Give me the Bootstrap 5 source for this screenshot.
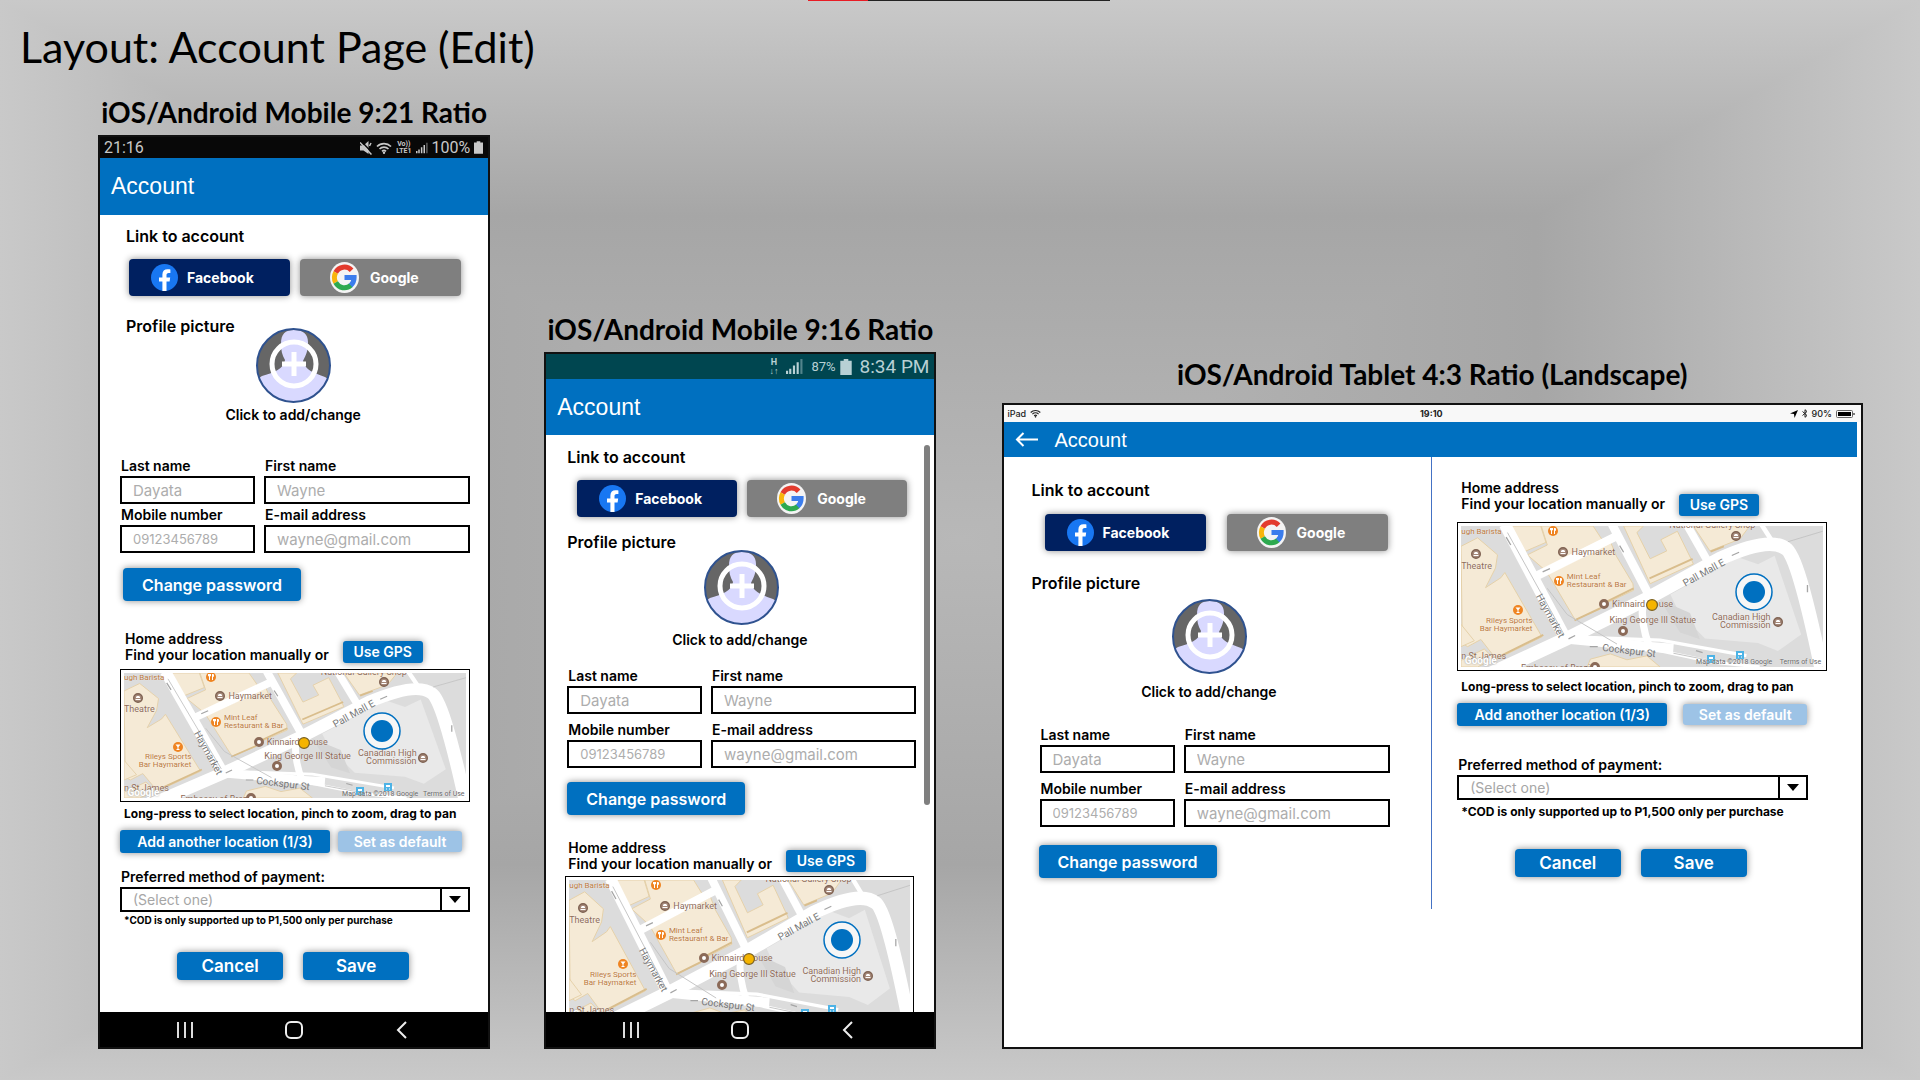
<!DOCTYPE html>
<html lang="en">
<head>
<meta charset="utf-8">
<meta name="viewport" content="width=device-width, initial-scale=1">
<title>Layout: Account Page (Edit)</title>
<link href="https://cdn.jsdelivr.net/npm/bootstrap@5.3.0/dist/css/bootstrap.min.css" rel="stylesheet">
<style>
  :root { --brand: #0070c0; }
  body { font-family: Inter, "Noto Sans", sans-serif; color: #000; background: #bfbfbf; }
  .slide { position: relative; isolation: isolate; min-height: 100vh; overflow: hidden; padding: 0 57px 31px 98px; background: linear-gradient(to bottom, #c9c9c9 0, #a6a6a6 20%, #b8b8b8 50%, #a6a6a6 80%, #c9c9c9 100%); }
  .slide::before { content: ""; position: absolute; inset: 0; z-index: -1; background: linear-gradient(to right, #c9c9c9 0, #a6a6a6 20%, #b8b8b8 50%, #a6a6a6 80%, #c9c9c9 100%); clip-path: polygon(0 0, 100% 100%, 100% 0, 0 100%); }
  .share-bar { position: absolute; top: 0; left: 42.1%; width: 15.7%; height: 1px; background: linear-gradient(to right, #e81c24 20%, #222 20%); }
  .slide-title { font: 400 43px/50px Lato, sans-serif; margin: 0 0 0 -78px; padding-top: 22px; }
  .boards { margin-top: 24px; }
  .board-phone { flex: 392 1 0; min-width: 0; }
  .board-tablet { flex: 861 1 0; min-width: 0; }
  .gap-a { flex: 54 1 0; } .gap-b { flex: 65 1 0; }
  .caption { font: 700 28px/32px Lato, sans-serif; margin: 0 0 7px; text-align: center; white-space: nowrap; }
  .board-tablet .caption { margin-bottom: 13px; }
  .device { border: 2px solid #111; background: #fff; }

  .status { font: 400 16px/21px Roboto, sans-serif; height: 21px; padding: 0 5px 0 4px; }
  .status-dark { background: #080808; color: #c8c8c8; }
  .status-teal { background: #004650; color: #b8d0d4; height: 25px; font-size: 19px; }
  .status-pad { font: 500 9px/17px Inter, sans-serif; height: 17px; padding: 0 6px 0 4px; background: #f8f8f8; color: #222; }
  .status-pad > * { flex: 1 1 0; }
  .net-lte { font-size: 7px; line-height: 7px; }
  .net-h { font-size: 9px; line-height: 9px; }
  .tiny { font-size: 13px; }
  .app-head { background: var(--brand); color: #fff; height: 57px; padding-left: 11px; font: 400 23px/1 "Liberation Sans", sans-serif; }
  .status-teal + .app-head { height: 56px; }
  .app-head h3 { font: inherit; margin: 0; }
  .app-head-pad { height: 35px; margin-right: 4px; padding-left: 11px; gap: 17px; font-size: 20px; }

  .label-lg { font-weight: 600; font-size: 16px; line-height: 20px; }
  .label-md { font-weight: 600; font-size: 14px; line-height: 20px; }
  .label-sm { font-weight: 600; font-size: 14px; line-height: 16px; margin: 0 0 2px 1px; display: block; white-space: nowrap; }
  .hint { font-weight: 700; font-size: 12px; line-height: 16px; white-space: nowrap; margin: 0; }
  .hint-min { font-size: 10px; }

  .act { border: 0; border-radius: 3px; color: #fff; background: var(--brand); font-weight: 600; font-size: 14px; line-height: 20px; padding: 0; box-shadow: 0 0 7px rgba(0,0,0,.45); white-space: nowrap; }
  .act:disabled { background: #9dc3e6; color: #fff; opacity: 1; }
  .act-social { flex: 1 1 50%; height: 37px; display: flex; align-items: center; gap: 9px; padding: 0 0 0 22px; font-weight: 700; border-radius: 4px; }
  .act-fb { background: #002060; }
  .act-gg { background: #7f7f7f; padding-left: 30px; gap: 11px; }
  .act-password { width: 178px; height: 33px; font-size: 16px; border-radius: 4px; }
  .act-gps { width: 80px; height: 22px; }
  .act-add { flex: 209 1 0; max-width: 210px; height: 23px; }
  .act-default { flex: 124 1 0; max-width: 124px; height: 21px; }
  .act-final { width: 106px; height: 28px; font-size: 17px; border-radius: 4px; }
  .finals { gap: 20px; padding-right: 4px; }

  .avatar-grid { display: grid; grid-template-columns: 1fr 75px 1fr; }
  .avatar { width: 75px; height: 75px; border: 0; padding: 0; background: none; border-radius: 50%; display: block; }
  .avatar svg { display: block; }
  .click { padding-right: 4px; }
  .fields { display: grid; grid-template-columns: 135fr 206fr; column-gap: 9px; }
  .box { display: block; width: 100%; height: 28px; border: 2px solid #000; border-radius: 0; background: #fff; padding: 0 11px; font-size: 15px; font-weight: 400; color: #000; }
  .box[type=tel] { font-size: 13px; }
  .box::placeholder { color: #adadad; opacity: 1; }
  .pick { position: relative; }
  .pick select { appearance: none; width: 100%; height: 25px; border: 2px solid #000; border-radius: 0; background: #fff; color: #a6a6a6; font-size: 14px; padding: 0 40px 0 11px; display: block; }
  .pick span { position: absolute; right: 0; top: 0; bottom: 0; width: 30px; border: 2px solid #000; pointer-events: none; display: flex; align-items: center; justify-content: center; }
  .home { gap: 14px; }
  .address { line-height: 16px; font-size: 14px; font-weight: 600; white-space: nowrap; }

  .map-frame { border: 1px solid #000; padding: 3px; background: #fff; height: 133px; }
  .map-tall { height: 149px; }
  .map-canvas { position: relative; height: 100%; overflow: hidden; font: 400 9px/8px Roboto, sans-serif; color: #8d6b58; background: #dedede; }
  .map-canvas > svg.ground { position: absolute; inset: 0; width: 100%; height: 100%; }
  .tag { position: absolute; transform: translateY(-50%); white-space: nowrap; text-shadow: 0 0 1px #fff; }
  .tag-end { transform: translate(-100%, -50%); text-align: right; }
  .road { position: absolute; transform: translate(-50%, -50%) rotate(var(--turn)); color: #777; font-size: 10px; white-space: nowrap; }
  .food { color: #b9783c; font-size: 8px; }
  .legal { color: #666; font-size: 7px; }
  .maker { color: #fff; font-weight: 700; font-size: 10px; text-shadow: 0 0 2px #999; }
  .poi { position: absolute; width: 10px; height: 10px; transform: translate(-50%, -50%); display: block; }
  .poi-me { width: 12px; height: 12px; }
  .spot { position: absolute; width: 38px; height: 38px; transform: translate(-50%, -50%); left: var(--pin-x); top: var(--pin-y); }

  /* 9:21 phone */
  .p21 { padding: 11px 18px 32px 20px; }
  .p21 .label-lg { margin-left: 6px; }
  .p21 .social { margin: 13px 9px 0; gap: 10px; }
  .p21 .profile { margin-top: 20px; padding-right: 4px; } .p21 .avatar { margin-top: 12px; } .p21 .click { margin-top: 2px; }
  .p21 .fields { margin-top: 33px; row-gap: 3px; }
  .p21 .act-password { margin: 15px 0 0 3px; }
  .p21 .home { margin: 30px 0 6px 5px; }
  /* 9:16 phone */
  .p16 { position: relative; height: 577px; overflow: hidden; padding: 12px 18px 0 21px; }
  .p16 .social { margin: 13px 9px 0 10px; gap: 10px; }
  .p16 .profile { margin-top: 15px; } .p16 .avatar { margin-top: 18px; } .p16 .click { margin-top: 5px; }
  .p16 .fields { margin-top: 18px; row-gap: 8px; }
  .p16 .act-password { margin-top: 14px; }
  .p16 .home { margin: 25px 0 4px 1px; }
  .p16 .map-frame { margin: 0 2px 0 -2px; }
  .thumb { position: absolute; right: 4px; top: 10px; width: 6px; height: 360px; border-radius: 3px; background: #7f7f7f; }
  /* 4:3 tablet */
  .p43 { min-height: 590px; }
  .pane-left { min-height: 452px; border-right: 1px solid #4472c4; padding: 23px 41px 0 28px; }
  .pane-right { padding: 23px 34px 0 25px; }
  .inset-l { margin-left: 8px; }
  .p43 .social { margin: 14px 2px 0 13px; gap: 21px; }
  .p43 .profile { margin-top: 22px; padding-right: 2px; } .p43 .avatar { margin-top: 26px; } .p43 .click { margin-top: 8px; }
  .p43 .fields { margin-top: 25px; row-gap: 8px; }
  .p43 .act-password { margin: 18px 0 0 7px; }
  .p43 .home { margin: 0 0 6px 4px; }
  .p43 .payment { margin-top: 31px; }
  .p43 .finals { margin-top: 29px; }
  .narrow { max-width: 351px; }

  .keys { background: #000; height: 35px; padding: 0 30px; }
  .keys button { flex: 1 1 0; background: none; border: 0; padding: 0; display: flex; align-items: center; justify-content: center; }
</style>
</head>
<body>
<svg width="0" height="0" class="position-absolute" aria-hidden="true">
  <symbol id="i-fb" viewBox="0 0 27 27"><circle cx="13.500" cy="13.500" r="13.500" fill="#1877f2"/><path fill="#fff" d="M11.400 27v-9.500H8V13.600h3.400v-3c0-3.500 2-5.300 5.100-5.300 1.500 0 2.900.2 2.900.2v3.400h-1.700c-1.700 0-2.200 1-2.200 2.100v2.600h3.700l-.6 3.900h-3.100V27z"/></symbol>
  <symbol id="i-gg" viewBox="0 0 29 31"><ellipse cx="14.500" cy="15.500" rx="14.500" ry="15.500" fill="#f4f4f4"/><g fill="none" stroke-width="5"><path stroke="#e33b2e" d="M5.700 10.500A10 10.500 0 0 1 21.600 8.200"/><path stroke="#f9b50b" d="M5.700 10.500a10.500 10.500 0 0 0 0 10"/><path stroke="#2da94f" d="M5.700 20.500A10 10.500 0 0 0 21 23.200"/><path stroke="#3b7ded" d="M14.500 15.500h9.600c0 3.200-1.200 6-3.400 8"/></g></symbol>
  <symbol id="i-avatar" viewBox="0 0 75 75"><clipPath id="round"><circle cx="37.500" cy="37.500" r="36.500"/></clipPath><g clip-path="url(#round)"><rect width="75" height="75" fill="#666"/><path fill="#d9d9ff" d="M25 16C25 6 29 2 38 2s14 4 14 12c0 9-2 13-5 19 2 9 11 12 22 16l6 4v22H0V52l6-4c11-3 22-7 23-16-3-5-4-10-4-16z"/></g><circle cx="37.500" cy="37.500" r="36.500" fill="none" stroke="#2f528f" stroke-width="2"/><circle cx="38" cy="36" r="22" fill="none" stroke="#fff" stroke-width="5"/><path stroke="#fff" stroke-width="5" d="M26 36h24M38 24v24"/></symbol>
  <symbol id="i-down" viewBox="0 0 12 7"><path d="M0 0h12L6 7z"/></symbol>
  <symbol id="i-wifi" viewBox="0 0 16 12"><g fill="none" stroke="currentColor" stroke-width="1.700"><path d="M1 4.500a10 10 0 0 1 14 0M3.500 7a6.500 6.500 0 0 1 9 0M6 9.300a3 3 0 0 1 4 0"/></g><circle cx="8" cy="10.800" r="1.200" fill="currentColor"/></symbol>
  <symbol id="i-signal" viewBox="0 0 16 14"><path fill="currentColor" d="M0 11h2v3H0zM3 9h2v5H3zM6.500 6h2v8h-2zM10 3h2v11h-2z"/><path fill="currentColor" opacity=".45" d="M13.500 0h2v14h-2z"/></symbol>
  <symbol id="i-batt" viewBox="0 0 10 14"><path fill="currentColor" d="M3 0h4v1.500h3V14H0V1.500h3z"/></symbol>
  <symbol id="i-mute" viewBox="0 0 12 14"><path fill="currentColor" d="M0 4.500h3.500L8.500 0v13L3.500 9.500H0z"/><path stroke="#080808" stroke-width="1.500" d="m1 0 11 11.500"/><path stroke="currentColor" stroke-width="1.500" d="m0 1.500 11.500 12M9.500 5 11 2"/></symbol>
  <symbol id="k-recent" viewBox="0 0 18 18"><path stroke="#ddd" stroke-width="2" d="M2 1v16M9 1v16M16 1v16"/></symbol>
  <symbol id="k-home" viewBox="0 0 18 18"><rect x="1" y="1" width="16" height="16" rx="5" fill="none" stroke="#eee" stroke-width="2"/></symbol>
  <symbol id="k-back" viewBox="0 0 18 18"><path fill="none" stroke="#eee" stroke-width="2" d="m11 1-8 8 8 8"/></symbol>
  <symbol id="m-food" viewBox="0 0 10 10"><circle cx="5" cy="5" r="5" fill="#ef8422"/><path stroke="#fff" fill="none" d="M3.500 2v6M6.500 2v6M2.500 2v2h2V2M6.500 2.500h1v2h-1"/></symbol>
  <symbol id="m-bar" viewBox="0 0 10 10"><circle cx="5" cy="5" r="5" fill="#ef8422"/><path fill="#fff" d="M2.500 2.500h5L5.500 5v2h1v1h-3V7h1V5z"/></symbol>
  <symbol id="m-dot" viewBox="0 0 10 10"><circle cx="5" cy="5" r="3.500" fill="#fff" stroke="#8b6a58" stroke-width="3"/></symbol>
  <symbol id="m-place" viewBox="0 0 10 10"><circle cx="5" cy="5" r="4.300" fill="#a5897a" stroke="#7f6252" stroke-width="1.400"/><path stroke="#fff" fill="none" d="M2.500 6.500h5M3 4.500h4M3.500 3.500h3"/></symbol>
  <symbol id="m-bus" viewBox="0 0 10 10"><rect x="1" y="1" width="8" height="8" fill="#4db3e6"/><path fill="#fff" d="M3 3h4v2H3zM3 6.500h1v1H3zM6 6.500h1v1H6z"/></symbol>
  <symbol id="m-spot" viewBox="0 0 38 38"><circle cx="19" cy="19" r="18" fill="#fff" fill-opacity=".6" stroke="#0070c0" stroke-width="1.500"/><circle cx="19" cy="19" r="11" fill="#0070c0"/></symbol>
  <symbol id="m-me" viewBox="0 0 10 10"><circle cx="5" cy="5" r="4.500" fill="#f5b400" stroke="#7a6020"/></symbol>
</svg>

<template id="map-template">
  <div class="map-canvas">
    <svg class="ground" viewBox="0 0 1090 430" preserveAspectRatio="none" aria-hidden="true">
      <rect width="1090" height="430" fill="#dcdcdc"/>
      <g fill="#f5ead6" stroke="#e5d0a8" stroke-width="3">
        <path d="M0 62 50 36l60 52-6 40-30 60 46-30 12-16 112 196-138 68-46-60-40 22-16-10z"/>
        <path d="M0 300l40 50-40 18zM30 395l40-20 30 30-50 25H0v-20z"/>
        <path d="M150 0h90l16 50-64 28zM200 88l60-30-18-58h156l30 46-180 84z"/>
        <path d="M262 146 452 52l16 40 50 84 2 20-92 44-10 14-74 32z"/>
        <path d="M490 0h60l-20 20 40 80 50-24-18-34 50-26 44 90 4 10-130 60z"/>
        <path d="M700 0h170l-30 40-90 36z"/>
        <path d="M380 430l10-24 60-16 50 18 60-12 40 34z"/>
      </g>
      <g fill="none" stroke="#d9bd8c" stroke-width="6"><path d="M120 396l128-64M342 288l80-38M424 238l96-48M568 160l130-60M752 78l40-16"/></g>
      <path fill="#e9e9e9" d="M835 95l60 22 50-26 30 90 20 60 30 90-70 50-60-24-160-14-80-84-24-50z"/>
      <path fill="#d5d5d5" d="M600 225l60 100 60 20-30-80z"/>
      <g fill="none" stroke="#fff" stroke-linejoin="round">
        <path stroke-width="36" d="M132-5 318 350"/>
        <path stroke-width="26" d="M222 155 480 25M455-5 572 222"/>
        <path stroke-width="24" d="M680-5 748 116"/>
        <path stroke-width="14" d="M905-5 940 50"/>
        <path stroke-width="42" d="M90 450 330 338 560 222 780 100Q930 30 980 70 1015 90 1085 430"/>
        <path stroke-width="30" d="M330 345Q440 355 560 368L640 374"/>
        <path stroke-width="22" d="M548 235q-8 60 20 135"/>
        <path stroke-width="10" d="M380 340 600 348 860 395M560 372 760 415 900 430"/>
      </g>
      <g fill="none" stroke="#c4c4c4" stroke-width="3"><path d="M985 48 1090 16M260 190l60 80 150 90M140 20l170 310M640 388l110 22"/></g>
      <g fill="none" stroke="#a5a5a5" stroke-width="4"><path d="M136 34l14 24M246 140l22-10M478 60l12 20M816 90l22-10M1044 180v22M388 368h24M324 344l20-10M708 380l20 6"/></g>
    </svg>
    <span class="tag food" style="left:0;top:4%">ugh Barista</span>
    <svg class="poi" style="left:25.500%;top:3.500%"><use href="#m-food"/></svg>
    <span class="tag" style="left:57.500%;top:-1%">National Gallery Shop</span>
    <svg class="poi" style="left:76%;top:7%"><use href="#m-place"/></svg>
    <svg class="poi" style="left:4%;top:20%"><use href="#m-place"/></svg>
    <span class="tag" style="left:0;top:28.500%">Theatre</span>
    <svg class="poi" style="left:28%;top:18.500%"><use href="#m-place"/></svg>
    <span class="tag" style="left:30.500%;top:18.500%">Haymarket</span>
    <svg class="poi" style="left:27%;top:39%"><use href="#m-food"/></svg>
    <span class="tag food" style="left:29.200%;top:39%">Mint Leaf<br>Restaurant &amp; Bar</span>
    <svg class="poi" style="left:39.500%;top:55%"><use href="#m-dot"/></svg>
    <span class="tag" style="left:41.700%;top:55%">Kinnaird House</span>
    <span class="tag" style="left:41%;top:66.500%">King George III Statue</span>
    <svg class="poi" style="left:44.700%;top:74.500%"><use href="#m-dot"/></svg>
    <svg class="poi" style="left:15.700%;top:59.500%"><use href="#m-bar"/></svg>
    <span class="tag tag-end food" style="left:19.700%;top:70.500%">Rileys Sports<br>Bar Haymarket</span>
    <span class="tag tag-end" style="left:85.500%;top:67.500%">Canadian High<br>Commission</span>
    <svg class="poi" style="left:87.500%;top:68%"><use href="#m-place"/></svg>
    <span class="road" style="--turn:61deg;left:24.500%;top:64%">Haymarket</span>
    <span class="road" style="--turn:-29deg;left:67.200%;top:33%">Pall Mall E</span>
    <span class="road" style="--turn:7deg;left:46.400%;top:89%">Cockspur St</span>
    <span class="tag" style="left:0;top:92%">n St James</span>
    <span class="tag maker" style="left:1%;top:96%">Google</span>
    <span class="tag" style="left:16.500%;top:101%">Embassy of Brazil</span>
    <svg class="poi" style="left:37%;top:100%"><use href="#m-dot"/></svg>
    <svg class="poi" style="left:69%;top:94%"><use href="#m-bus"/></svg>
    <svg class="poi" style="left:77%;top:91.500%"><use href="#m-bus"/></svg>
    <span class="tag tag-end legal" style="left:86%;top:96.500%">Map data ©2018 Google</span>
    <span class="tag tag-end legal" style="left:99.500%;top:96.500%">Terms of Use</span>
    <svg class="poi poi-me" style="left:52.600%;top:56%"><use href="#m-me"/></svg>
    <svg class="spot"><use href="#m-spot"/></svg>
  </div>
</template>

<main class="slide">
  <div class="share-bar"></div>
  <h1 class="slide-title">Layout: Account Page (Edit)</h1>
  <div class="boards d-flex align-items-end">

    <section class="board-phone">
      <h2 class="caption">iOS/Android Mobile 9:21 Ratio</h2>
      <div class="device">
        <div class="status status-dark d-flex align-items-center justify-content-between">
          <span>21:16</span>
          <span class="d-flex align-items-center gap-1">
            <svg width="12" height="14"><use href="#i-mute"/></svg>
            <svg width="16" height="12"><use href="#i-wifi"/></svg>
            <span class="net-lte fw-bold text-center">Vo))<br>LTE1</span>
            <svg width="12" height="12"><use href="#i-signal"/></svg>
            <span>100%</span>
            <svg width="9" height="13"><use href="#i-batt"/></svg>
          </span>
        </div>
        <header class="app-head d-flex align-items-center"><h3>Account</h3></header>
        <form class="p21">
          <div class="label-lg">Link to account</div>
          <div class="social d-flex">
            <button type="button" class="act act-social act-fb"><svg width="27" height="27"><use href="#i-fb"/></svg>Facebook</button>
            <button type="button" class="act act-social act-gg"><svg width="29" height="31"><use href="#i-gg"/></svg>Google</button>
          </div>
          <div class="profile avatar-grid">
            <div class="label-lg text-nowrap">Profile picture</div>
            <button type="button" class="avatar" aria-label="Add or change picture"><svg width="75" height="75"><use href="#i-avatar"/></svg></button>
          </div>
          <div class="click label-md text-center">Click to add/change</div>
          <div class="fields">
            <div><label class="label-sm" for="a-last">Last name</label><input class="box" id="a-last" placeholder="Dayata"></div>
            <div><label class="label-sm" for="a-first">First name</label><input class="box" id="a-first" placeholder="Wayne"></div>
            <div><label class="label-sm" for="a-mobile">Mobile number</label><input class="box" id="a-mobile" type="tel" placeholder="09123456789"></div>
            <div><label class="label-sm" for="a-mail">E-mail address</label><input class="box" id="a-mail" type="email" placeholder="wayne@gmail.com"></div>
          </div>
          <button type="button" class="act act-password d-block">Change password</button>
          <div class="home d-flex align-items-end">
            <div class="address">Home address<br>Find your location manually or</div>
            <button type="button" class="act act-gps">Use GPS</button>
          </div>
          <div class="map-frame" data-map style="--pin-x:75.500%;--pin-y:46%"></div>
          <p class="hint mt-1 ms-1">Long-press to select location, pinch to zoom, drag to pan</p>
          <div class="d-flex align-items-center mt-2 gap-2">
            <button type="button" class="act act-add">Add another location (1/3)</button>
            <button type="button" class="act act-default" disabled>Set as default</button>
          </div>
          <label class="label-sm mt-3" for="a-pay">Preferred method of payment:</label>
          <div class="pick"><select id="a-pay"><option>(Select one)</option><option>COD</option></select><span><svg width="12" height="7"><use href="#i-down"/></svg></span></div>
          <p class="hint hint-min ms-1">*COD is only supported up to P1,500 only per purchase</p>
          <div class="finals d-flex justify-content-center mt-4">
            <button type="button" class="act act-final">Cancel</button>
            <button type="submit" class="act act-final">Save</button>
          </div>
        </form>
        <nav class="keys d-flex">
          <button type="button" aria-label="Recent apps"><svg width="18" height="18"><use href="#k-recent"/></svg></button>
          <button type="button" aria-label="Home"><svg width="18" height="18"><use href="#k-home"/></svg></button>
          <button type="button" aria-label="Back"><svg width="18" height="18"><use href="#k-back"/></svg></button>
        </nav>
      </div>
    </section>
    <div class="gap-a"></div>

    <section class="board-phone">
      <h2 class="caption">iOS/Android Mobile 9:16 Ratio</h2>
      <div class="device">
        <div class="status status-teal d-flex align-items-center justify-content-end gap-2">
          <span class="net-h fw-bold text-center">H<br>↓↑</span>
          <svg width="17" height="15"><use href="#i-signal"/></svg>
          <span class="d-flex align-items-center gap-1">
            <span class="tiny">87%</span>
            <svg width="12" height="16"><use href="#i-batt"/></svg>
          </span>
          <span>8:34 PM</span>
        </div>
        <header class="app-head d-flex align-items-center"><h3>Account</h3></header>
        <form class="p16">
          <div class="label-lg">Link to account</div>
          <div class="social d-flex">
            <button type="button" class="act act-social act-fb"><svg width="27" height="27"><use href="#i-fb"/></svg>Facebook</button>
            <button type="button" class="act act-social act-gg"><svg width="29" height="31"><use href="#i-gg"/></svg>Google</button>
          </div>
          <div class="profile avatar-grid">
            <div class="label-lg text-nowrap">Profile picture</div>
            <button type="button" class="avatar" aria-label="Add or change picture"><svg width="75" height="75"><use href="#i-avatar"/></svg></button>
          </div>
          <div class="click label-md text-center">Click to add/change</div>
          <div class="fields">
            <div><label class="label-sm" for="b-last">Last name</label><input class="box" id="b-last" placeholder="Dayata"></div>
            <div><label class="label-sm" for="b-first">First name</label><input class="box" id="b-first" placeholder="Wayne"></div>
            <div><label class="label-sm" for="b-mobile">Mobile number</label><input class="box" id="b-mobile" type="tel" placeholder="09123456789"></div>
            <div><label class="label-sm" for="b-mail">E-mail address</label><input class="box" id="b-mail" type="email" placeholder="wayne@gmail.com"></div>
          </div>
          <button type="button" class="act act-password d-block">Change password</button>
          <div class="home d-flex align-items-end">
            <div class="address">Home address<br>Find your location manually or</div>
            <button type="button" class="act act-gps">Use GPS</button>
          </div>
          <div class="map-frame map-tall" data-map style="--pin-x:80%;--pin-y:42.500%"></div>
          <div class="thumb"></div>
        </form>
        <nav class="keys d-flex">
          <button type="button" aria-label="Recent apps"><svg width="18" height="18"><use href="#k-recent"/></svg></button>
          <button type="button" aria-label="Home"><svg width="18" height="18"><use href="#k-home"/></svg></button>
          <button type="button" aria-label="Back"><svg width="18" height="18"><use href="#k-back"/></svg></button>
        </nav>
      </div>
    </section>
    <div class="gap-b"></div>

    <section class="board-tablet">
      <h2 class="caption">iOS/Android Tablet 4:3 Ratio (Landscape)</h2>
      <div class="device">
        <div class="status-pad d-flex align-items-center">
          <span class="d-flex align-items-center gap-1">iPad <svg width="11" height="9"><use href="#i-wifi"/></svg></span>
          <span class="text-center fw-bold">19:10</span>
          <span class="d-flex align-items-center justify-content-end gap-1">
            <svg width="8" height="8" viewBox="0 0 8 8"><path d="M8 0 4.500 8 4 4 0 3.500z"/></svg>
            <svg width="6" height="9" viewBox="0 0 6 9"><path fill="none" stroke="#222" d="m.5 2.500 4.500 4-2 1.800V.7l2 1.800-4.500 4"/></svg>
            <span>90%</span>
            <svg width="19" height="8" viewBox="0 0 19 8"><rect x=".5" y=".5" width="16" height="7" rx="1" fill="none" stroke="#666"/><rect x="2" y="2" width="13" height="4"/><path d="M17.500 3h1v2h-1z"/></svg>
          </span>
        </div>
        <header class="app-head app-head-pad d-flex align-items-center">
          <a href="#" aria-label="Back" class="d-flex"><svg width="23" height="15" viewBox="0 0 23 15"><path fill="none" stroke="#fff" stroke-width="2" d="M23 7.500H2M8.500 1 2 7.500 8.500 14"/></svg></a>
          <h3>Account</h3>
        </header>
        <form class="p43 d-flex align-items-start">
          <div class="pane-left w-50">
            <div class="label-lg">Link to account</div>
            <div class="social d-flex">
              <button type="button" class="act act-social act-fb"><svg width="27" height="27"><use href="#i-fb"/></svg>Facebook</button>
              <button type="button" class="act act-social act-gg"><svg width="29" height="31"><use href="#i-gg"/></svg>Google</button>
            </div>
            <div class="profile avatar-grid">
              <div class="label-lg text-nowrap">Profile picture</div>
              <button type="button" class="avatar" aria-label="Add or change picture"><svg width="75" height="75"><use href="#i-avatar"/></svg></button>
            </div>
            <div class="click label-md text-center">Click to add/change</div>
            <div class="fields inset-l">
              <div><label class="label-sm" for="c-last">Last name</label><input class="box" id="c-last" placeholder="Dayata"></div>
              <div><label class="label-sm" for="c-first">First name</label><input class="box" id="c-first" placeholder="Wayne"></div>
              <div><label class="label-sm" for="c-mobile">Mobile number</label><input class="box" id="c-mobile" type="tel" placeholder="09123456789"></div>
              <div><label class="label-sm" for="c-mail">E-mail address</label><input class="box" id="c-mail" type="email" placeholder="wayne@gmail.com"></div>
            </div>
            <button type="button" class="act act-password d-block">Change password</button>
          </div>
          <div class="pane-right w-50">
            <div class="home d-flex align-items-end">
              <div class="address pb-1">Home address<br>Find your location manually or</div>
              <button type="button" class="act act-gps">Use GPS</button>
            </div>
            <div class="map-frame map-tall" data-map style="--pin-x:81%;--pin-y:47%"></div>
            <p class="hint mt-2 ms-1">Long-press to select location, pinch to zoom, drag to pan</p>
            <div class="d-flex align-items-center mt-2 gap-3">
              <button type="button" class="act act-add">Add another location (1/3)</button>
              <button type="button" class="act act-default" disabled>Set as default</button>
            </div>
            <label class="label-sm payment" for="c-pay">Preferred method of payment:</label>
            <div class="pick narrow"><select id="c-pay"><option>(Select one)</option><option>COD</option></select><span><svg width="12" height="7"><use href="#i-down"/></svg></span></div>
            <p class="hint mt-1 ms-1">*COD is only supported up to P1,500 only per purchase</p>
            <div class="finals narrow d-flex justify-content-center">
              <button type="button" class="act act-final">Cancel</button>
              <button type="submit" class="act act-final">Save</button>
            </div>
          </div>
        </form>
      </div>
    </section>
  </div>
</main>
<script src="https://cdn.jsdelivr.net/npm/bootstrap@5.3.0/dist/js/bootstrap.bundle.min.js"></script>
<script>
  const mapTemplate = document.getElementById('map-template');
  document.querySelectorAll('[data-map]').forEach(frame => frame.append(mapTemplate.content.cloneNode(true)));
</script>
</body>
</html>
